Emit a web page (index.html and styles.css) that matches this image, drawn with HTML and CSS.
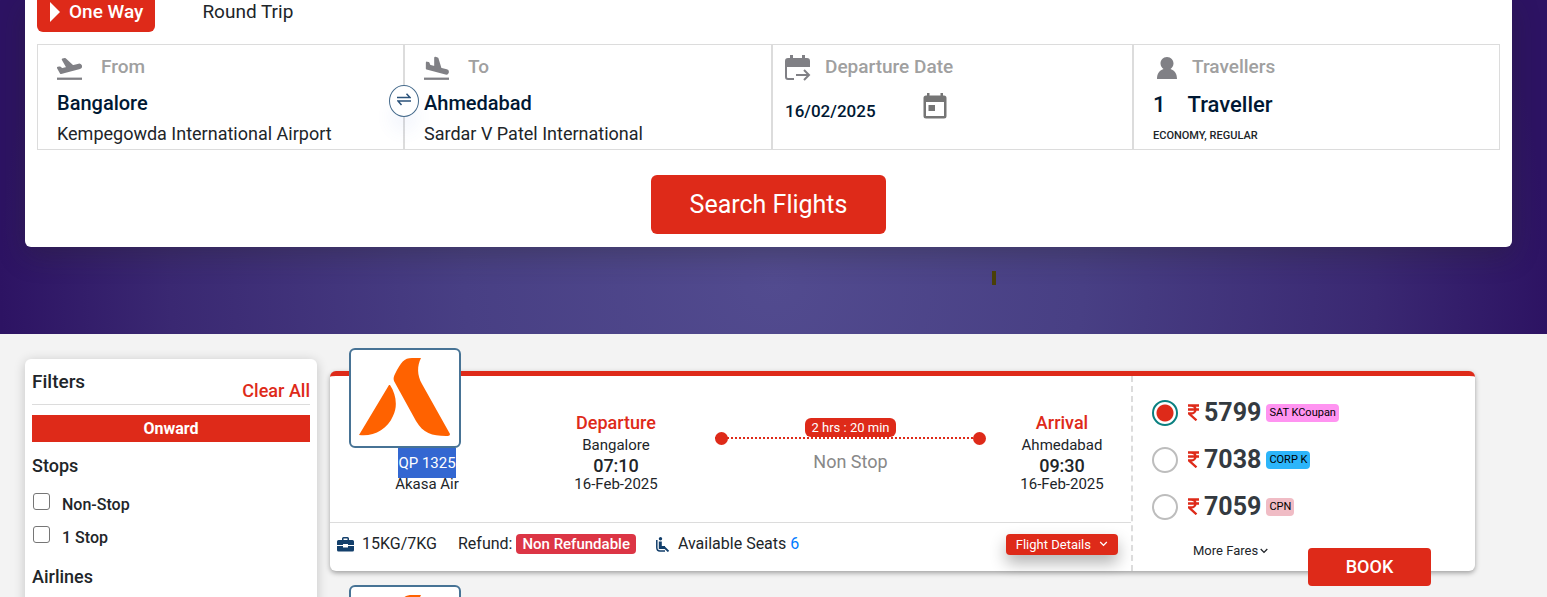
FILE: index.html
```html
<!DOCTYPE html>
<html lang="en">
<head>
    <meta charset="UTF-8">
    <meta name="viewport" content="width=device-width, initial-scale=1.0">
    <title>Flight Search</title>
    <link rel="stylesheet" href="styles.css">
</head>
<body>
    <!-- shared icons -->
    <svg class="sprite" aria-hidden="true">
        <symbol id="akasa" viewBox="0 0 92 78">
            <path fill="#ff6200" d="M31 27C37 36 39 48 34 58C28 72 14 79 0 77L30 27Z"/>
            <path fill="#ff6200" d="M62 0C58 8 58 17 63 26L91 76C91 78 89 78 87 78C73 78 64 75 57 63L35 23C34 20 35 18 36 16C42 4 45 0 53 0Z"/>
        </symbol>
        <symbol id="rupee" viewBox="0 0 11 17">
            <path fill="none" stroke="#de2a19" stroke-width="2.300" d="M0 1.500H11M0 5.500H11M0 1.500H3C9 1.500 9 9.500 3 9.500H1L8.500 16.300"/>
        </symbol>
        <symbol id="chevron" viewBox="0 0 8 6">
            <path fill="none" stroke="currentColor" stroke-width="1.300" d="M.7 1L4 4.400L7.300 1"/>
        </symbol>
    </svg>

    <div class="page">
        <!-- SEARCH -->
        <header class="hero">
            <form class="search-card">
                <div class="trip-tabs">
                    <button type="button" class="trip-tab active">
                        <svg width="10" height="20" viewBox="0 0 10 20"><path fill="#fff" d="M0 0L10 10L0 20Z"/></svg>
                        One Way
                    </button>
                    <button type="button" class="trip-tab">Round Trip</button>
                </div>

                <div class="search-fields">
                    <div class="field">
                        <label class="field-label" for="from">
                            <svg width="25" height="25" viewBox="1 1 22 22" fill="#808085"><path d="M1 20h22v2H1z"/><path stroke="#808085" stroke-width="1.800" stroke-linejoin="round" d="M22.070 9.640c-.21-.8-1.040-1.280-1.840-1.060L14.920 10 8.020 3.570l-1.930.51 4.140 7.170-4.970 1.330-1.970-1.540-1.450.39 1.820 3.160.77 1.330 16.570-4.430c.82-.23 1.280-1.050 1.070-1.850z"/></svg>
                            From
                        </label>
                        <input class="city" id="from" type="text" value="Bangalore">
                        <div class="airport">Kempegowda International Airport</div>
                        <button type="button" class="swap-btn" aria-label="Swap cities">
                            <svg width="14" height="13" viewBox="0 0 14 13" fill="none" stroke="#2b527a" stroke-width="1.500"><path d="M0 4.500H13L9.500 .7M14 8H1L4.500 12"/></svg>
                        </button>
                    </div>

                    <div class="field">
                        <label class="field-label" for="to">
                            <svg width="25" height="25" viewBox="1 1 22 22" fill="#808085"><path d="M1 20h22v2H1z"/><path stroke="#808085" stroke-width="1.800" stroke-linejoin="round" d="M3.510 12.030l16.570 4.440c.8.210 1.620-.26 1.840-1.060.21-.8-.26-1.620-1.060-1.840l-5.310-1.420-2.760-9.020L10.860 2.610v8.280L5.900 9.560l-.93-2.320-1.450-.39z"/></svg>
                            To
                        </label>
                        <input class="city" id="to" type="text" value="Ahmedabad">
                        <div class="airport">Sardar V Patel International</div>
                    </div>

                    <div class="field field-date">
                        <label class="field-label" for="date">
                            <svg width="26" height="26" viewBox="0 0 26 26" fill="none" stroke="#808085" stroke-width="2"><path fill="#808085" stroke="none" d="M0 12V6Q0 3 3 3H5V0H8V3H17V0H20V3H22Q25 3 25 6V12Z"/><path d="M1 11V22Q1 24 3 24H9M11 20H24M19 15L24 20L19 25"/></svg>
                            Departure Date
                        </label>
                        <div class="date-row">
                            <input class="date" id="date" type="text" value="16/02/2025">
                            <button type="button" class="calendar-btn" aria-label="Open calendar">
                                <svg width="24" height="26" viewBox="0 0 24 26"><path fill="#757575" d="M4 0H6.500V2.500H17.500V0H20V2.500H21Q23.500 2.500 23.500 5V23Q23.500 25.500 21 25.500H3Q.5 25.500 .5 23V5Q.5 2.500 3 2.500H4ZM3 9V23H21V9ZM5.500 12H12V18H5.500Z" fill-rule="evenodd"/></svg>
                            </button>
                        </div>
                    </div>

                    <div class="field">
                        <div class="field-label">
                            <svg class="person" width="20" height="22" viewBox="0 0 20 22" fill="#808085"><path d="M10 0C14 0 16.500 3 16.500 6.500C16.500 9 15 11 13.500 12C18 13.500 20 17 20 22H0C0 17 2 13.500 6.500 12C5 11 3.500 9 3.500 6.500C3.500 3 6 0 10 0Z"/></svg>
                            Travellers
                        </div>
                        <div class="travellers"><span>1</span><span>Traveller</span></div>
                        <div class="cabin">ECONOMY, REGULAR</div>
                    </div>
                </div>

                <button type="submit" class="search-btn">Search Flights</button>
            </form>
            <span class="hero-mark"></span>
        </header>

        <!-- RESULTS -->
        <main class="results">
            <aside class="filters">
                <div class="filters-head">
                    <h2>Filters</h2>
                    <a href="#" class="clear-all">Clear All</a>
                </div>
                <div class="direction">Onward</div>
                <h3>Stops</h3>
                <label class="check"><input type="checkbox"> <span>Non-Stop</span></label>
                <label class="check"><input type="checkbox"> <span>1 Stop</span></label>
                <h3>Airlines</h3>
            </aside>

            <div class="flights">
                <article class="flight">
                    <div class="airline-logo"><svg width="92" height="78"><use href="#akasa"/></svg></div>

                    <div class="flight-main">
                        <div class="flight-route">
                            <div class="airline">
                                <mark>QP 1325</mark>
                                <span>Akasa Air</span>
                            </div>
                            <div class="stop-info">
                                <strong>Departure</strong>
                                <span>Bangalore</span>
                                <time>07:10</time>
                                <span class="day">16-Feb-2025</span>
                            </div>
                            <div class="duration">
                                <span class="duration-time">2 hrs : 20 min</span>
                                <div class="duration-line"></div>
                                <span class="duration-stops">Non Stop</span>
                            </div>
                            <div class="stop-info">
                                <strong>Arrival</strong>
                                <span>Ahmedabad</span>
                                <time>09:30</time>
                                <span class="day">16-Feb-2025</span>
                            </div>
                        </div>

                        <div class="flight-foot">
                            <svg width="17" height="15" viewBox="0 0 17 15" fill="#133f6b"><path d="M5 3V1.500Q5 0 6.500 0H10.500Q12 0 12 1.500V3H15.500Q17 3 17 4.500V8H11V7H6V8H0V4.500Q0 3 1.500 3ZM6.500 3H10.500V1.500H6.500ZM0 9H6V10.500H11V9H17V13Q17 14.500 15.500 14.500H1.500Q0 14.500 0 13Z" fill-rule="evenodd"/></svg>
                            <span class="baggage">15KG/7KG</span>
                            <span class="refund">Refund: <span class="badge">Non Refundable</span></span>
                            <svg width="14" height="15" viewBox="0 0 14 15" fill="none" stroke="#133f6b"><circle cx="4.500" cy="1.800" r="1.700" fill="#133f6b" stroke="none"/><path stroke-width="1.500" d="M.8 3V10.500Q.8 14 4 14H9"/><path stroke-width="3" d="M4.300 4.500V10.500H9"/><path stroke-width="1.800" d="M8 10L12.500 14.500"/></svg>
                            <span class="seats">Available Seats <b>6</b></span>
                            <button type="button" class="details-btn">Flight Details <svg width="9" height="6"><use href="#chevron"/></svg></button>
                        </div>
                    </div>

                    <div class="fares">
                        <label class="fare">
                            <input type="radio" name="fare" checked>
                            <svg width="11" height="17"><use href="#rupee"/></svg>
                            <span class="price">5799</span>
                            <span class="tag tag-pink">SAT KCoupan</span>
                        </label>
                        <label class="fare">
                            <input type="radio" name="fare">
                            <svg width="11" height="17"><use href="#rupee"/></svg>
                            <span class="price">7038</span>
                            <span class="tag tag-blue">CORP K</span>
                        </label>
                        <label class="fare">
                            <input type="radio" name="fare">
                            <svg width="11" height="17"><use href="#rupee"/></svg>
                            <span class="price">7059</span>
                            <span class="tag tag-rose">CPN</span>
                        </label>
                        <button type="button" class="more-fares">More Fares <svg width="8" height="6"><use href="#chevron"/></svg></button>
                        <button type="button" class="book-btn">BOOK</button>
                    </div>
                </article>

                <article class="flight">
                    <div class="airline-logo"><svg width="92" height="78"><use href="#akasa"/></svg></div>
                </article>
            </div>
        </main>
    </div>
</body>
</html>
```
FILE: styles.css
```css
* {
    box-sizing: border-box;
}

body {
    margin: 0;
    background: #f3f3f3;
    color: #212529;
    font-family: Roboto, "Liberation Sans", sans-serif;
    font-size: 16px;
}

button,
input {
    font-family: inherit;
    color: inherit;
    border: none;
    background: none;
    padding: 0;
    margin: 0;
}

button {
    cursor: pointer;
}

svg {
    flex-shrink: 0;
}

h2, h3 {
    margin: 0;
    font-size: 18px;
    font-weight: 500;
    line-height: 22px;
}

.sprite {
    position: absolute;
    width: 0;
    height: 0;
}

.page {
    height: 100vh;
    overflow: hidden;
}

/* Search */
.hero {
    position: relative;
    padding: 0 35px 87px 25px;
    background: radial-gradient(farthest-side circle at 50% 280px, #524b8f, #483f84 40%, #3a2872 78%, #2d1363);
}

.search-card {
    padding: 0 12px 13px;
    background: white;
    border-radius: 0 0 6px 6px;
    box-shadow: 0 8px 28px rgba(40, 40, 30, 0.3);
}

.trip-tabs {
    display: flex;
    gap: 37px;
    margin-bottom: 12px;
}

.trip-tab {
    display: flex;
    align-items: center;
    gap: 9px;
    padding: 0 10px 8px;
    font-size: 19px;
    line-height: 24px;
}

.trip-tab.active {
    padding: 0 12px 8px 13px;
    background: #de2a19;
    border-radius: 0 0 6px 6px;
    color: white;
    font-weight: 500;
}

.search-fields {
    display: grid;
    grid-template-columns: 367fr 368fr 361fr 367fr;
    margin-bottom: 25px;
}

.field {
    position: relative;
    padding: 3px 19px 1px;
    border: 1px solid #dcdcdc;
}

.field-label {
    display: flex;
    align-items: center;
    gap: 19px;
    height: 36px;
    color: #a0a0a0;
    font-size: 19px;
    font-weight: 500;
}

.field-label svg {
    margin-top: 4px;
}

.city {
    display: block;
    width: 100%;
    height: 37px;
    color: #001833;
    font-size: 20px;
    font-weight: 500;
}

.airport {
    font-size: 18px;
    line-height: 25px;
}

.field-date {
    padding-left: 12px;
}

.field-date .field-label {
    gap: 14px;
}

.date-row {
    display: flex;
    align-items: center;
    gap: 9px;
}

.date {
    width: 129px;
    height: 34px;
    margin-top: 10px;
    color: #001833;
    font-size: 17px;
    font-weight: 500;
}

.calendar-btn svg {
    display: block;
}

.field-label .person {
    margin: 4px -4px 0 4px;
}

.travellers {
    display: flex;
    gap: 22px;
    padding-top: 3px;
    color: #001833;
    font-size: 22px;
    font-weight: 500;
    line-height: 36px;
}

.cabin {
    font-size: 11px;
    font-weight: 500;
    line-height: 25px;
}

.swap-btn {
    position: absolute;
    z-index: 1;
    top: 40px;
    right: -16px;
    width: 30px;
    height: 32px;
    border: 1px solid #466b8c;
    border-radius: 50%;
    background: white;
    box-shadow: 0 16px 16px rgba(80, 120, 220, 0.06);
}

.search-btn {
    display: block;
    margin: 0 auto;
    padding: 0 39px;
    background: #de2a19;
    border-radius: 6px;
    color: white;
    font-size: 25px;
    line-height: 59px;
}

.hero-mark {
    position: absolute;
    left: 992px;
    top: 271px;
    width: 4px;
    height: 14px;
    background: #4a4008;
}

/* Results */
.results {
    display: flex;
    align-items: flex-start;
    gap: 13px;
    padding: 25px 72px 0 25px;
}

/* Filters */
.filters {
    flex: 0 0 292px;
    padding: 12px 7px 600px;
    background: white;
    border-radius: 6px;
    box-shadow: 0 2px 12px rgba(0, 0, 0, 0.2);
}

.filters-head {
    display: flex;
    justify-content: space-between;
    border-bottom: 1px solid #dcdcdc;
    margin-bottom: 10px;
}

.filters-head h2 {
    font-size: 19px;
}

.clear-all {
    padding: 8px 0 1px;
    color: #de2a19;
    font-size: 18px;
    font-weight: 500;
    line-height: 24px;
    text-decoration: none;
}

.direction {
    background: #de2a19;
    color: white;
    font-weight: 700;
    line-height: 27px;
    text-align: center;
}

.filters h3 {
    padding: 13px 0 15px;
}

.check {
    display: flex;
    gap: 12px;
    height: 33px;
    font-weight: 500;
    line-height: 26px;
}

.check + h3 {
    padding-top: 8px;
}

.check input {
    appearance: none;
    width: 17px;
    height: 17px;
    margin: 1px 0 0 1px;
    border: 1px solid #767676;
    border-radius: 3px;
}

/* Flight cards */
.flights {
    flex: 1;
    padding-top: 12px;
}

.flight {
    position: relative;
    display: flex;
    min-height: 200px;
    margin-bottom: 37px;
    background: white;
    border-top: 5px solid #de2a19;
    border-radius: 6px;
    box-shadow: 0 2px 5px rgba(0, 0, 0, 0.35);
}

.airline-logo {
    position: absolute;
    top: -28px;
    left: 19px;
    display: flex;
    justify-content: center;
    width: 112px;
    height: 100px;
    padding-top: 8px;
    background: white;
    border: 2px solid #477395;
    border-radius: 6px;
}

.flight-main {
    flex: 1;
    display: flex;
    flex-direction: column;
}

.flight-route {
    flex: 1;
    display: grid;
    grid-template-columns: 194fr 184fr 285fr 138fr;
    border-bottom: 1px solid #dcdcdc;
}

.airline {
    display: flex;
    flex-direction: column;
    align-items: center;
    padding-top: 72px;
    font-size: 15px;
    line-height: 12px;
}

.airline mark {
    background: #3367d1;
    color: white;
    line-height: 30px;
}

.stop-info {
    display: flex;
    flex-direction: column;
    align-items: center;
    padding-top: 35px;
    font-size: 15px;
    line-height: 20px;
}

.stop-info strong {
    color: #de2a19;
    font-size: 18px;
    font-weight: 500;
    line-height: 24px;
}

.stop-info time {
    font-size: 18px;
    font-weight: 500;
    line-height: 21px;
}

.stop-info .day {
    line-height: 16px;
}

.duration {
    display: flex;
    flex-direction: column;
    align-items: center;
    padding: 42px 7px 0;
}

.duration-time {
    padding: 0 7px;
    background: #de2a19;
    border-radius: 6px;
    color: white;
    font-size: 13px;
    line-height: 19px;
}

.duration-line {
    display: flex;
    align-items: center;
    justify-content: space-between;
    width: 100%;
    height: 2px;
    margin-bottom: 11px;
    background: repeating-linear-gradient(90deg, #de2a19 0 2px, transparent 2px 4px);
}

.duration-line::before,
.duration-line::after {
    content: '';
    width: 13px;
    height: 13px;
    background: #de2a19;
    border-radius: 50%;
}

.duration-stops {
    color: #888;
    font-size: 18px;
    line-height: 24px;
}

.flight-foot {
    display: flex;
    align-items: center;
    height: 48px;
    padding: 0 13px 6px 7px;
    line-height: 20px;
}

.baggage {
    margin: 0 21px 0 8px;
}

.refund {
    margin-right: 20px;
}

.badge {
    display: inline-block;
    padding: 0 6px;
    background: #dc3545;
    border-radius: 4px;
    color: white;
    font-size: 15px;
    font-weight: 500;
}

.seats {
    margin-left: 8px;
}

.seats b {
    color: #007bff;
    font-weight: 400;
}

.details-btn {
    display: flex;
    align-items: center;
    gap: 8px;
    margin-left: auto;
    padding: 0 10px;
    background: #de2a19;
    border-radius: 4px;
    box-shadow: 0 8px 16px rgba(0, 0, 0, 0.3);
    color: white;
    font-size: 13px;
    line-height: 21px;
}

/* Fares */
.fares {
    position: relative;
    flex: 0 0 344px;
    padding: 13px 0 0 19px;
    border-left: 2px dashed #dcdcdc;
}

.fare {
    display: flex;
    align-items: center;
    height: 47px;
}

.fare input {
    appearance: none;
    width: 26px;
    height: 26px;
    margin-right: 10px;
    border: 2px solid #bdbdbd;
    border-radius: 50%;
}

.fare input:checked {
    border-color: #0a8080;
    background: radial-gradient(circle, #de2a19 8px, transparent 9px);
}

.price {
    margin: 0 5px;
    color: #343a40;
    font-size: 25px;
    font-weight: 700;
}

.tag {
    padding: 0 3px;
    border-radius: 4px;
    color: black;
    font-size: 11px;
    line-height: 18px;
}

.tag-pink {
    background: #ff94f1;
}

.tag-blue {
    background: #2cb5fa;
}

.tag-rose {
    background: #f0bcc5;
}

.more-fares {
    display: flex;
    align-items: center;
    gap: 2px;
    margin: 11px 0 0 41px;
    font-size: 13px;
    line-height: 20px;
}

.book-btn {
    position: absolute;
    right: 44px;
    bottom: -15px;
    width: 123px;
    background: #de2a19;
    border-radius: 4px;
    color: white;
    font-size: 18px;
    font-weight: 500;
    line-height: 38px;
}
```
